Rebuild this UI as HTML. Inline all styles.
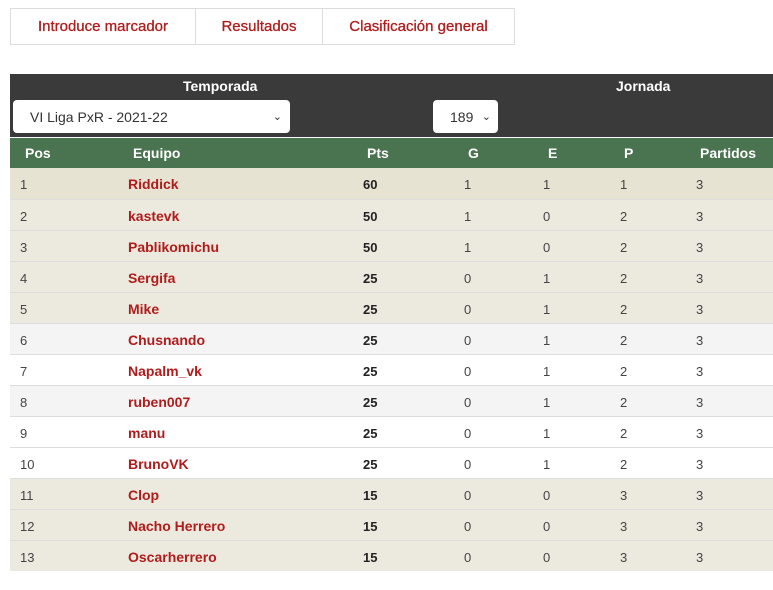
<!DOCTYPE html>
<html><head><meta charset="utf-8"><style>
*{box-sizing:border-box;margin:0;padding:0}
body{width:773px;height:590px;background:#fff;font-family:"Liberation Sans",sans-serif;position:relative;overflow:hidden}
.btn{position:absolute;top:8px;height:37px;border:1px solid #ddd;color:#b01c1c;font-size:15px;display:flex;align-items:center;justify-content:center;-webkit-text-stroke:0.3px #b01c1c}
.dark{position:absolute;left:10px;top:74px;width:763px;height:63px;background:#3a3a3a}
.lbl{position:absolute;color:#fff;font-weight:bold;font-size:14px}
.sel{position:absolute;background:#fff;border-radius:4px;font-size:14px;color:#333;display:flex;align-items:center}
.gh{position:absolute;left:10px;top:138px;width:763px;height:30px;background:#4a7350;color:#fff;font-weight:bold;font-size:14px}
.gh span,.r span{position:absolute;top:0;line-height:30px}
.r{position:absolute;left:10px;width:763px;height:31px;border-top:1px solid #ddd;font-size:13px;color:#444}
.r span{line-height:33px}
.r span.n{line-height:32px}
.n{color:#b01c1c;font-weight:bold;font-size:14px}
.p{font-weight:bold;color:#222}
</style></head><body>
<div class="btn" style="left:10px;width:186px">Introduce marcador</div>
<div class="btn" style="left:195px;width:128px">Resultados</div>
<div class="btn" style="left:322px;width:193px">Clasificación general</div>
<div class="dark"></div>
<div class="lbl" style="left:183px;top:78px">Temporada</div>
<div class="lbl" style="left:616px;top:78px">Jornada</div>
<div class="sel" style="left:13px;top:100px;width:277px;height:33px;padding-left:17px">VI Liga PxR - 2021-22<span style="position:absolute;right:8px;font-size:11px">&#8964;</span></div>
<div class="sel" style="left:433px;top:100px;width:65px;height:33px;padding-left:17px">189<span style="position:absolute;right:7px;font-size:11px">&#8964;</span></div>
<div class="gh"><span style="left:15px">Pos</span><span style="left:123px">Equipo</span><span style="left:357px">Pts</span><span style="left:458px">G</span><span style="left:538px">E</span><span style="left:614px">P</span><span style="left:690px">Partidos</span></div>
<div id="t"></div>
<script>
var d=[["Riddick",60,1,1,1],["kastevk",50,1,0,2],["Pablikomichu",50,1,0,2],["Sergifa",25,0,1,2],["Mike",25,0,1,2],["Chusnando",25,0,1,2],["Napalm_vk",25,0,1,2],["ruben007",25,0,1,2],["manu",25,0,1,2],["BrunoVK",25,0,1,2],["Clop",15,0,0,3],["Nacho Herrero",15,0,0,3],["Oscarherrero",15,0,0,3]];
var c=["#e7e3d3","#eceadf","#eceadf","#eceadf","#eceadf","#f4f4f4","#fff","#f4f4f4","#fff","#fff","#eceadf","#eceadf","#eceadf"];
var h="";d.forEach(function(r,i){h+='<div class="r" style="top:'+(168+i*31)+'px;background:'+c[i]+(i==0?';border-top:none':'')+'"><span style="left:10px">'+(i+1)+'</span><span class="n" style="left:118px">'+r[0]+'</span><span class="p" style="left:353px">'+r[1]+'</span><span style="left:454px">'+r[2]+'</span><span style="left:533px">'+r[3]+'</span><span style="left:610px">'+r[4]+'</span><span style="left:686px">3</span></div>'});
document.getElementById("t").innerHTML=h;
</script>
</body></html>
